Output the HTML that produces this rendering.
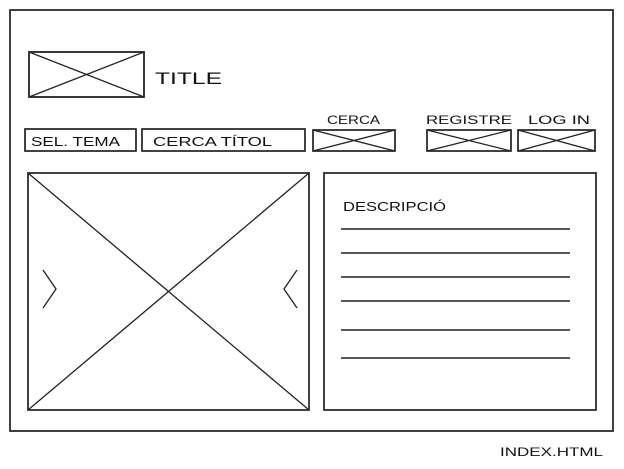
<!DOCTYPE html>
<html><head><meta charset="utf-8"><style>
html,body{margin:0;padding:0;background:#fff;width:624px;height:469px;overflow:hidden}
svg{display:block}
text{font-family:"Liberation Sans",sans-serif;fill:#111}
</style></head><body>
<svg width="624" height="469" viewBox="0 0 624 469" stroke="#222" fill="none" stroke-width="1.3">
<rect x="10" y="10" width="603" height="421" stroke-width="1.7"/>
<rect x="29" y="52" width="115" height="45" stroke-width="1.8"/>
<path d="M29 52L144 97M144 52L29 97"/>
<text x="155" y="84" font-size="17" stroke="none" textLength="67" lengthAdjust="spacingAndGlyphs">TITLE</text>
<rect x="25" y="129" width="111" height="22" stroke-width="1.7"/>
<text x="31" y="146" font-size="13" stroke="none" textLength="89" lengthAdjust="spacingAndGlyphs">SEL. TEMA</text>
<rect x="142" y="129" width="163" height="22" stroke-width="1.7"/>
<text x="153" y="146" font-size="13" stroke="none" textLength="119" lengthAdjust="spacingAndGlyphs">CERCA TÍTOL</text>
<text x="327" y="124" font-size="12" stroke="none" textLength="53" lengthAdjust="spacingAndGlyphs">CERCA</text>
<rect x="313" y="130" width="82" height="21" stroke-width="1.7"/>
<path d="M313 130L395 151M395 130L313 151"/>
<text x="426" y="124" font-size="12" stroke="none" textLength="86" lengthAdjust="spacingAndGlyphs">REGISTRE</text>
<rect x="427" y="130" width="84" height="21" stroke-width="1.7"/>
<path d="M427 130L511 151M511 130L427 151"/>
<text x="528" y="124" font-size="12" stroke="none" textLength="62" lengthAdjust="spacingAndGlyphs">LOG IN</text>
<rect x="518" y="130" width="77" height="21" stroke-width="1.7"/>
<path d="M518 130L595 151M595 130L518 151"/>
<rect x="28" y="173" width="281" height="237" stroke-width="1.7"/>
<path d="M28 173L309 410M309 173L28 410"/>
<path d="M43 270L56 289L43 308M297 270L284 289L297 308"/>
<rect x="324" y="173" width="272" height="237" stroke-width="1.7"/>
<text x="343" y="211" font-size="13" stroke="none" textLength="103" lengthAdjust="spacingAndGlyphs">DESCRIPCIÓ</text>
<path d="M341 229H570M341 253H570M341 277H570M341 301H570M341 330H570M341 358H570" stroke-width="1.5"/>
<text x="500" y="456" font-size="12" stroke="none" textLength="103" lengthAdjust="spacingAndGlyphs">INDEX.HTML</text>
</svg>
</body></html>
